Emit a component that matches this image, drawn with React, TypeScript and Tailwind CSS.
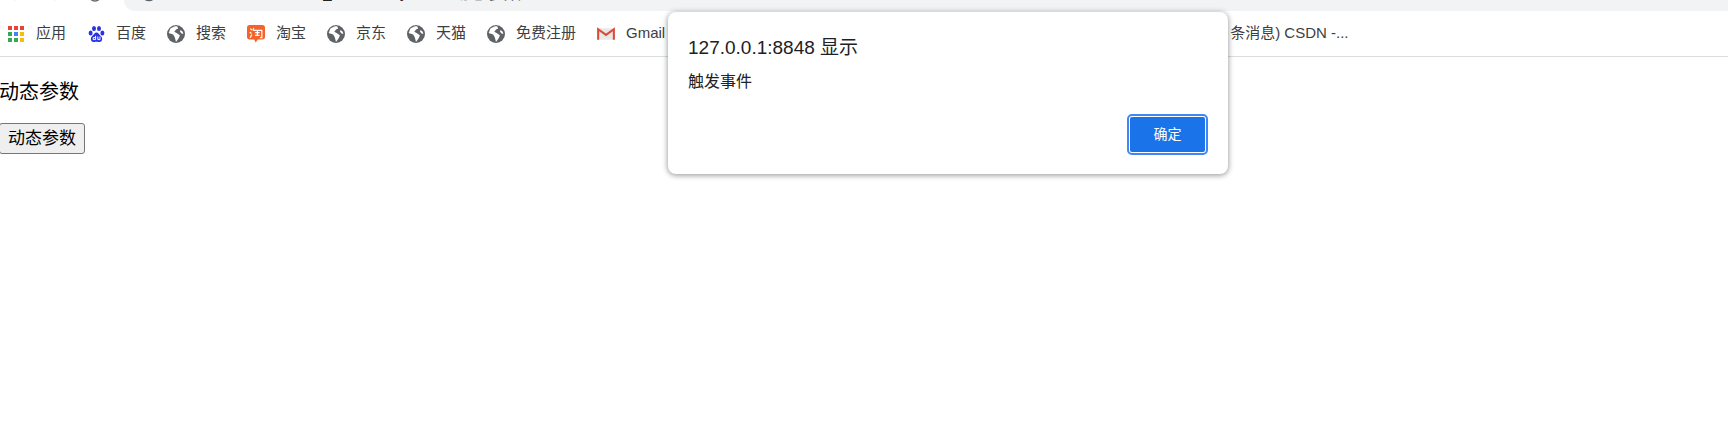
import type { ReactNode } from "react"
import { ArrowLeft, ArrowRight, RotateCw, Info } from "lucide-react"

const font = { fontFamily: '"Liberation Sans", "Noto Sans CJK SC", sans-serif' }

function Globe() {
  return (
    <svg width="18" height="18" viewBox="0 0 16 16">
      <circle cx="8" cy="8" r="8" fill="#5f6368" />
      <path d="M7 1 3 3 1.500 7l4 1.500L7 11l1 4 2.500-3.500 1-2.500-3-2-2-1L8 4l2-1-1-2z" fill="#fff" />
      <path d="M12 4.500l2 1.500.5 2-1.500-.5-1.500-1.500z" fill="#fff" />
    </svg>
  )
}

function Apps() {
  const colors = [
    "#ea4335", "#ea4335", "#ea4335",
    "#34a853", "#4285f4", "#fbbc04",
    "#34a853", "#34a853", "#fbbc04",
  ]
  return (
    <div className="grid grid-cols-3 gap-[2px] w-[16px] h-[16px]">
      {colors.map((c, i) => (
        <svg key={i} width="4" height="4">
          <rect width="4" height="4" fill={c} />
        </svg>
      ))}
    </div>
  )
}

function Baidu() {
  return (
    <svg width="17" height="18" viewBox="0 0 17 18">
      <g fill="#2932e1">
        <ellipse cx="2.600" cy="8" rx="2" ry="2.500" />
        <ellipse cx="6" cy="3.500" rx="2" ry="2.500" />
        <ellipse cx="11" cy="3.500" rx="2" ry="2.500" />
        <ellipse cx="14.400" cy="8" rx="2" ry="2.500" />
        <path d="M8.500 7.500c-2 0-2.500 2-4 3.200C3 12 2.500 13.500 3 15c.5 1.600 2 2.200 3.500 2 1.400-.2 2.600-.2 4 0 1.500.2 3-.4 3.500-2 .5-1.500 0-3-1.500-4.300-1.500-1.200-2-3.200-4-3.200z" />
      </g>
      <path d="M7.600 10.800v3.800H5.200v-2h2.400M9.800 11.500v3.100h2.200v-3.100" fill="none" stroke="#fff" strokeWidth="1" />
    </svg>
  )
}

function Taobao() {
  return (
    <svg width="20" height="20" viewBox="0 0 20 20">
      <path d="M3 0h14a3 3 0 0 1 3 3v10a3 3 0 0 1-3 3h-5l-2.500 3.500L8 16H3a3 3 0 0 1-3-3V3a3 3 0 0 1 3-3z" fill="#f4642a" />
      <path d="M3.500 4l2 1.500M3 8l2 1.500M3.500 14l2-3.500M7.500 3.500l-1 2.500M7 6h9.500v8h-2M9 8.500h5M11.500 6.500v5M9 11.500h5" fill="none" stroke="#fff" strokeWidth="1.300" />
    </svg>
  )
}

function Gmail() {
  return (
    <svg width="19" height="14" viewBox="0 0 19 14">
      <path d="M1 1h17v12H1z" fill="#e8e8e8" />
      <path d="M1.200 13V2l8.300 6 8.300-6v11" fill="none" stroke="#dd4b39" strokeWidth="2.200" />
    </svg>
  )
}

function Bookmark({ icon, label, className }: { icon: ReactNode; label: string; className: string }) {
  return (
    <div className={`flex items-center gap-[11px] shrink-0 ${className}`}>
      <div className="flex w-[18px] shrink-0 items-center justify-center">{icon}</div>
      <span className="text-[15px] text-[#3c4043] whitespace-nowrap">{label}</span>
    </div>
  )
}

export default function App() {
  return (
    <div className="relative h-[448px] w-[1728px] overflow-hidden bg-white" style={font}>
      {/* toolbar strip, only the bottom edge of it is in frame */}
      <div className="flex h-[11px] overflow-hidden">
        <div className="flex w-[124px] shrink-0 items-start pl-[7px] gap-[24px] text-[#5f6368]">
          <ArrowLeft size={16} className="-mt-[13px] shrink-0 text-[#bdc1c6]" />
          <ArrowRight size={16} className="-mt-[13px] shrink-0 text-[#bdc1c6]" />
          <RotateCw size={16} className="-mt-[13px] shrink-0" />
        </div>
        <div className="flex h-[11px] flex-1 items-start rounded-bl-[14px] bg-[#f1f3f4] pl-[17px] text-[15px] leading-[15px] whitespace-nowrap text-[#202124]">
          <Info size={16} className="-mt-[14px] shrink-0 text-[#5f6368]" />
          <span className="-mt-[15px] ml-[8px] w-[115px] shrink-0">127.0.0.1:8848</span>
          <span className="-mt-[15px] shrink-0">/router_demo/array</span>
          <span className="-mt-[13px] ml-[20px] shrink-0">/</span>
          <span className="-mt-[15px] ml-[21px] shrink-0 text-[17px] leading-[17px]">动态参数</span>
        </div>
      </div>

      {/* bookmarks bar */}
      <div className="flex h-[46px] items-center border-b border-[#dadce0] pl-[7px]">
        <Bookmark icon={<Apps />} label="应用" className="w-[80px]" />
        <Bookmark icon={<Baidu />} label="百度" className="w-[80px]" />
        <Bookmark icon={<Globe />} label="搜索" className="w-[80px]" />
        <Bookmark icon={<Taobao />} label="淘宝" className="w-[80px]" />
        <Bookmark icon={<Globe />} label="京东" className="w-[80px]" />
        <Bookmark icon={<Globe />} label="天猫" className="w-[80px]" />
        <Bookmark icon={<Globe />} label="免费注册" className="w-[110px]" />
        <Bookmark icon={<Gmail />} label="Gmail" className="" />
        <span className="ml-[565px] text-[15px] text-[#3c4043] whitespace-nowrap">条消息) CSDN -...</span>
      </div>

      {/* page */}
      <div>
        <p className="mt-[22px] -ml-[1px] text-[20px] leading-[26px] text-black">动态参数</p>
        <button className="mt-[18px] -ml-[1px] block h-[31px] w-[86px] rounded-[3px] border border-[#767676] bg-[#efefef] text-[17px] text-black">
          动态参数
        </button>
      </div>

      {/* alert dialog */}
      <div className="absolute left-[668px] top-[12px] h-[162px] w-[560px] rounded-[8px] bg-white shadow-[0_1px_5px_1px_rgba(60,64,67,0.45)]">
        <div className="pl-[20px] pt-[24px] text-[19px] leading-[24px] text-[#202124]">127.0.0.1:8848 显示</div>
        <div className="pl-[20px] pt-[11px] text-[16px] leading-[22px] text-[#202124]">触发事件</div>
        <div className="absolute right-[20px] bottom-[19px] rounded-[5px] border-2 border-[#4285f4] bg-white p-[1px]">
          <button className="block h-[35px] w-[75px] rounded-[2px] bg-[#1a73e8] text-[14px] text-white">确定</button>
        </div>
      </div>
    </div>
  )
}
